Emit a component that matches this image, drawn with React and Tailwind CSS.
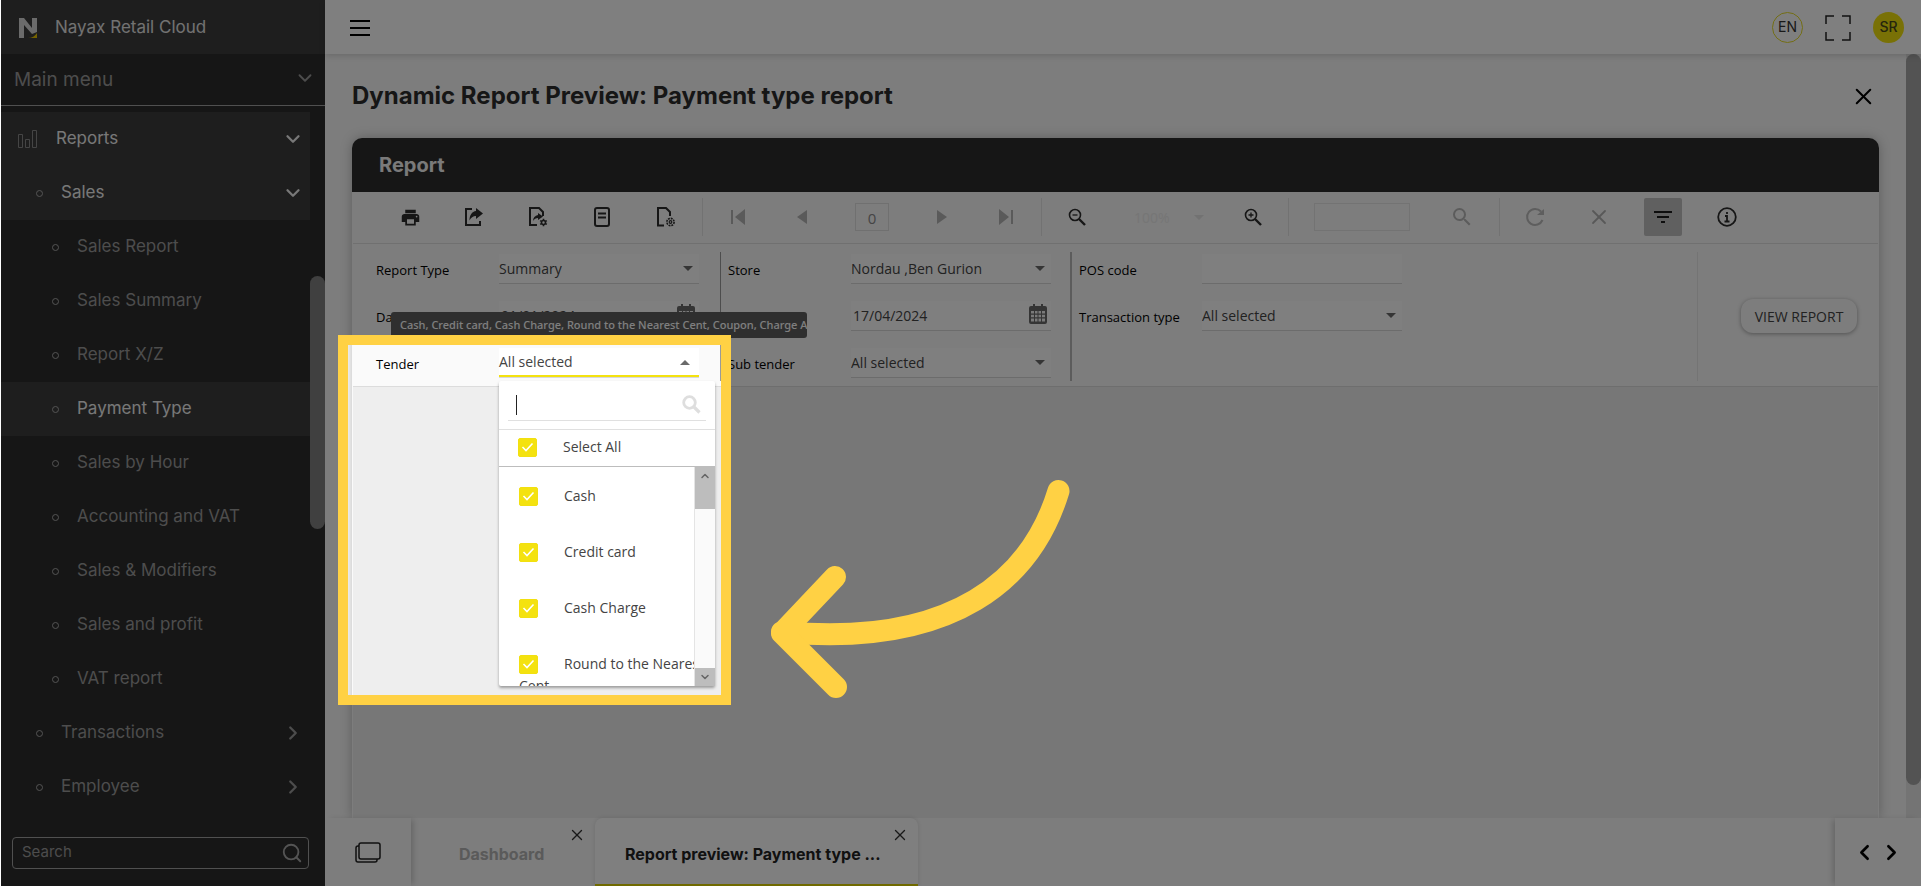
import { useState } from "react";
import { ChevronDown, ChevronRight, ChevronLeft, X, Search } from "lucide-react";
import { MdPrint, MdFilterList, MdSearch } from "react-icons/md";

const menuItems = [
  { label: "Reports", level: 0, open: true },
  { label: "Sales", level: 1, open: true },
  { label: "Sales Report", level: 2 },
  { label: "Sales Summary", level: 2 },
  { label: "Report X/Z", level: 2 },
  { label: "Payment Type", level: 2, active: true },
  { label: "Sales by Hour", level: 2 },
  { label: "Accounting and VAT", level: 2 },
  { label: "Sales & Modifiers", level: 2 },
  { label: "Sales and profit", level: 2 },
  { label: "VAT report", level: 2 },
  { label: "Transactions", level: 1 },
  { label: "Employee", level: 1 },
];

const tenders = ["Cash", "Credit card", "Cash Charge", "Round to the Nearest Cent"];

const Logo = () => (
  <svg width="20" height="22" viewBox="0 0 20 22">
    <path d="M1 21V1h5l8 10V1h5v14l-5 2-8-9v13z" fill="#d6d6d6" />
    <path d="M10 21c4 0 7-2 9-5v5z" fill="#e8c400" />
  </svg>
);

const BarsIcon = () => (
  <svg width="20" height="20" viewBox="0 0 20 20" fill="none" stroke="#8a8a8a">
    <path d="M0.5 5.5h4v13h-4zM7.5 10.5h4v8h-4zM14.5 1.5h4v17h-4z" />
  </svg>
);

const ExportIcon = () => (
  <svg width="20" height="20" viewBox="0 0 20 20" fill="none" stroke="#2d2d2d" strokeWidth="2">
    <path d="M8 2H2v16h14v-4" />
    <path d="M12 1l7 5.5-7 5.5V9c-3 0-5 1.500-6.500 4.500C5.500 8 8 4.500 12 4z" fill="#2d2d2d" stroke="none" />
  </svg>
);

const ExportSettingsIcon = () => (
  <svg width="20" height="20" viewBox="0 0 20 20" fill="none" stroke="#2d2d2d" strokeWidth="2">
    <path d="M9 18H2V1h9l4 4v4" />
    <path d="M10 6l5 3.500-5 3.500v-2c-2 0-4 1-5 3 0-3.500 2-5.500 5-6z" fill="#2d2d2d" stroke="none" />
    <circle cx="15.500" cy="15.500" r="2" strokeWidth="1.600" />
    <path
      d="M15.500 11.700v1.600M15.500 17.700v1.600M12.200 13.600l1.400.800M17.400 16.600l1.400.800M12.200 17.400l1.400-.800M17.400 14.400l1.400-.800"
      strokeWidth="1.600"
    />
  </svg>
);

const PageIcon = () => (
  <svg width="20" height="20" viewBox="0 0 20 20" fill="none" stroke="#2d2d2d" strokeWidth="2">
    <rect x="3" y="1" width="14" height="18" rx="2" />
    <path d="M6 6.500h8M6 10.500h8" />
  </svg>
);

const PageSetupIcon = () => (
  <svg width="20" height="20" viewBox="0 0 20 20" fill="none" stroke="#2d2d2d" strokeWidth="2">
    <path d="M8 18.500H2V1h8l4 4v4" />
    <circle cx="14.500" cy="15" r="3.600" strokeWidth="1.600" strokeDasharray="1.900 0.900" />
    <circle cx="14.500" cy="15" r="1.300" strokeWidth="1.200" />
  </svg>
);

const FirstIcon = () => (
  <svg width="16" height="16" viewBox="0 0 16 16" fill="#b4b4b4">
    <path d="M1 1h2v14H1zM15 0v16L5 8z" />
  </svg>
);

const PrevIcon = () => (
  <svg width="10" height="14" viewBox="0 0 10 14" fill="#b4b4b4">
    <path d="M10 0v14L0 7z" />
  </svg>
);

const ZoomIcon = ({ plus }) => (
  <svg width="18" height="18" viewBox="0 0 18 18" fill="none" stroke="#2d2d2d">
    <circle cx="7" cy="7" r="5.500" strokeWidth="1.600" />
    <path d="M11 11l6 6" strokeWidth="2.400" />
    <path d={plus ? "M4.500 7h5M7 4.500v5" : "M4.500 7h5"} strokeWidth="1.300" />
  </svg>
);

const RefreshIcon = () => (
  <svg width="20" height="20" viewBox="0 0 20 20" fill="none" stroke="#bcbcbc" strokeWidth="2">
    <path d="M17.500 13A8 8 0 1 1 16 4.500" />
    <path d="M19 2v6h-7z" fill="#bcbcbc" stroke="none" />
  </svg>
);

const InfoIcon = () => (
  <svg width="20" height="20" viewBox="0 0 20 20" fill="none" stroke="#2d2d2d" strokeWidth="1.800">
    <circle cx="10" cy="10" r="8.800" />
    <path d="M10 5v2M8 9h2v5.500M7.500 14.500h5" />
  </svg>
);

const CalendarIcon = () => (
  <svg width="18" height="20" viewBox="0 0 18 20">
    <path d="M2 2h2V0h2v2h6V0h2v2h2a2 2 0 0 1 2 2v14a2 2 0 0 1-2 2H2a2 2 0 0 1-2-2V4a2 2 0 0 1 2-2z" fill="#6a6a6a" />
    <path
      d="M2 7h3v2.500H2zM6 7h2.500v2.500H6zM9.500 7H12v2.500H9.500zM13 7h3v2.500h-3zM2 10.800h3v2.500H2zM6 10.800h2.500v2.500H6zM9.500 10.800H12v2.500H9.500zM13 10.800h3v2.500h-3zM2 14.600h3v3H2zM6 14.600h2.500v3H6zM9.500 14.600H12v3H9.500zM13 14.600h3v3h-3z"
      fill="#f4f4f4"
    />
  </svg>
);

const FilterSearchIcon = () => (
  <svg width="19" height="19" viewBox="0 0 19 19" fill="none" stroke="#dedede">
    <circle cx="7.500" cy="7.500" r="5.800" strokeWidth="2.800" />
    <path d="M11.500 11.500l6 6" strokeWidth="3.200" />
  </svg>
);

const Caret = ({ up, light }) => (
  <svg width="10" height="5" viewBox="0 0 10 5" fill={light ? "#e4e4e4" : "#6a6a6a"}>
    <path d={up ? "M0 5h10L5 0z" : "M0 0h10L5 5z"} />
  </svg>
);

const MenuItem = ({ item }) => {
  const bright = item.open || item.active;
  return (
    <button
      className={`flex items-center h-[54px] w-full shrink-0 text-left ${
        bright ? "bg-[#3c3c3c] text-[#f0f0f0]" : "text-[#9a9a9a]"
      } ${item.level === 0 ? "pl-[17px]" : item.level === 1 ? "pl-[35px]" : "pl-[51px]"}`}
    >
      {item.level === 0 ? (
        <BarsIcon />
      ) : (
        <span className="size-[7px] rounded-full border border-[#a8a8a8]" />
      )}
      <span className="flex-1 pl-[18px]">{item.label}</span>
      {item.open && <ChevronDown size={22} strokeWidth={2.5} className="mr-[6px]" />}
      {item.level === 1 && !item.open && <ChevronRight size={22} strokeWidth={2.5} className="mr-[6px]" />}
    </button>
  );
};

const Sidebar = () => (
  <aside className="flex flex-col w-[324px] shrink-0 bg-[#2d2d2d] text-[17px]">
    <div className="flex items-center gap-[17px] h-[54px] shrink-0 pl-[17px] pt-px bg-[#3c3c3c] text-[#e4e4e4]">
      <Logo />
      <span>Nayax Retail Cloud</span>
    </div>
    <button className="flex items-center justify-between h-[52px] shrink-0 pl-[13px] pr-[9px] pt-[2px] border-b border-[#a0a0a0] text-[19px] text-[#9a9a9a]">
      Main menu
      <ChevronDown size={22} strokeWidth={2} className="-mt-[5px]" />
    </button>
    <div className="flex flex-1 min-h-0 mt-[6px]">
      <nav className="flex flex-col flex-1 overflow-hidden">
        {menuItems.map((item) => (
          <MenuItem key={item.label} item={item} />
        ))}
      </nav>
      <div className="w-[15px] pt-[164px]">
        <div className="h-[253px] rounded-full bg-[#808080]" />
      </div>
    </div>
    <div className="flex items-center h-[32px] shrink-0 ml-[11px] mr-[16px] mt-[10px] mb-[17px] pl-[9px] pr-[5px] rounded border border-[#a0a0a0]">
      <input
        aria-label="Search menu"
        placeholder="Search"
        className="flex-1 min-w-0 pb-[2px] bg-transparent outline-none text-[15px] placeholder:text-[#9a9a9a]"
      />
      <Search size={22} strokeWidth={2} className="text-[#a8a8a8]" />
    </div>
  </aside>
);

const TopBar = () => (
  <header className="relative z-10 flex items-center h-[54px] shrink-0 pl-[25px] pr-[17px] pt-px bg-white shadow-[0_2px_6px_rgba(0,0,0,0.15)]">
    <button aria-label="Toggle menu" className="flex flex-col gap-[5px]">
      <span className="w-[20px] h-[2px] bg-black" />
      <span className="w-[20px] h-[2px] bg-black" />
      <span className="w-[20px] h-[2px] bg-black" />
    </button>
    <button className="size-[31px] ml-auto pb-[2px] rounded-full border border-[#e6dc28] text-[14px] text-[#333]">EN</button>
    <button aria-label="Full screen" className="mx-[22px]">
      <svg width="26" height="26" viewBox="0 0 26 26" fill="none" stroke="#222" strokeWidth="1.500">
        <path d="M1 9V1h8M17 1h8v8M25 17v8h-8M9 25H1v-8" />
      </svg>
    </button>
    <button className="size-[31px] pb-[2px] rounded-full bg-[#f2e30c] text-[14px] font-medium text-[#4a4a1c]">SR</button>
  </header>
);

const ToolButton = ({ label, children, active }) => (
  <button
    aria-label={label}
    className={`flex items-center justify-center size-[38px] shrink-0 rounded-[2px] ${active ? "bg-[#c0c0c0]" : ""}`}
  >
    {children}
  </button>
);

const Divider = () => <span className="w-px h-[38px] shrink-0 bg-[#e4e4e4]" />;

const Toolbar = () => (
  <div className="flex items-center h-[52px] pl-[38px] pb-px border-b border-[#e0e0e0] bg-[#fafafa]">
    <div className="flex gap-[26px] pr-[17px]">
      <ToolButton label="Print"><MdPrint size={21} className="text-[#2d2d2d]" /></ToolButton>
      <ToolButton label="Export"><ExportIcon /></ToolButton>
      <ToolButton label="Export settings"><ExportSettingsIcon /></ToolButton>
      <ToolButton label="Print preview"><PageIcon /></ToolButton>
      <ToolButton label="Page setup"><PageSetupIcon /></ToolButton>
    </div>
    <Divider />
    <div className="flex items-center gap-[26px] px-[16px]">
      <ToolButton label="First page"><FirstIcon /></ToolButton>
      <ToolButton label="Previous page"><PrevIcon /></ToolButton>
      <input
        aria-label="Page number"
        defaultValue="0"
        className="w-[34px] h-[28px] mx-[8px] pt-[2px] border border-[#e0e0e0] text-center text-[15px] text-[#8a8a8a]"
      />
      <ToolButton label="Next page"><span className="rotate-180"><PrevIcon /></span></ToolButton>
      <ToolButton label="Last page"><span className="rotate-180"><FirstIcon /></span></ToolButton>
    </div>
    <Divider />
    <div className="flex items-center px-[16px]">
      <ToolButton label="Zoom out"><ZoomIcon /></ToolButton>
      <div className="flex items-center w-[70px] ml-[38px] mr-[30px]">
        <select aria-label="Zoom" className="flex-1 appearance-none bg-transparent text-[14px] text-[#ececec]">
          <option>100%</option>
        </select>
        <Caret light />
      </div>
      <ToolButton label="Zoom in"><ZoomIcon plus /></ToolButton>
    </div>
    <Divider />
    <input aria-label="Find in report" className="w-[96px] h-[28px] ml-[25px] mr-[33px] border border-[#e6e6e6]" />
    <ToolButton label="Find"><MdSearch size={24} className="text-[#b8b8b8]" /></ToolButton>
    <span className="w-[18px]" />
    <Divider />
    <div className="flex gap-[26px] pl-[16px]">
      <ToolButton label="Refresh"><RefreshIcon /></ToolButton>
      <ToolButton label="Stop"><X size={24} strokeWidth={1.8} className="text-[#b0b0b0]" /></ToolButton>
      <ToolButton label="Toggle parameters" active><MdFilterList size={24} className="text-[#1c1c1c]" /></ToolButton>
      <ToolButton label="About"><InfoIcon /></ToolButton>
    </div>
  </div>
);

const Field = ({ id, label, children }) => (
  <div className="flex h-[47px]">
    <label htmlFor={id} className="w-[123px] shrink-0 pt-[6px] text-[13px] leading-[20px] text-black">
      {label}
    </label>
    <div className="relative flex items-center w-[200px] h-[30px] border-b border-[#d8d8d8] bg-white text-[14px] text-[#444]">
      {children}
    </div>
  </div>
);

const SelectField = ({ id, label, value }) => (
  <Field id={id} label={label}>
    <select id={id} className="flex-1 h-full appearance-none outline-none">
      <option>{value}</option>
    </select>
    <span className="absolute right-[6px] pointer-events-none"><Caret /></span>
  </Field>
);

const DateField = ({ id, label, value }) => (
  <Field id={id} label={label}>
    <input id={id} defaultValue={value} className="flex-1 min-w-0 pl-[2px] outline-none" />
    <button aria-label={`Pick ${label}`} className="pr-[4px] pb-[4px]"><CalendarIcon /></button>
  </Field>
);

const Check = ({ label, checked, onChange }) => (
  <label>
    <span className="relative inline-block size-[19px] mr-[26px] mb-[2px] align-middle">
      <input
        type="checkbox"
        checked={checked}
        onChange={onChange}
        className="block size-[19px] appearance-none rounded-[2px] border border-[#f2e010] checked:bg-[#f4e20f]"
      />
      <svg className="absolute left-0 top-0 pointer-events-none" width="19" height="19" viewBox="0 0 19 19" fill="none" stroke="#fff" strokeWidth="1.600">
        <path d="M4.500 9l3.500 3.500 6.500-7" />
      </svg>
    </span>
    {label}
  </label>
);

const TenderDropdown = ({ selected, setSelected }) => {
  const toggle = (name) =>
    setSelected(selected.includes(name) ? selected.filter((t) => t !== name) : [...selected, name]);

  return (
    <div className="absolute left-0 top-[33px] w-[216px] rounded-[2px] bg-white shadow-[0_2px_3px_rgba(0,0,0,0.35)]">
      <div className="h-[49px] px-[9px] border-b border-[#e0e0e0]">
        <div className="flex items-center h-[40px] pl-[8px] pr-[5px] pt-[8px] border-b border-[#e0e0e0]">
          <span className="w-px h-[20px] bg-[#222]" />
          <input aria-label="Filter tenders" className="flex-1 min-w-0 outline-none caret-transparent" />
          <FilterSearchIcon />
        </div>
      </div>
      <div className="h-[37px] pl-[19px] pt-[7px] leading-[20px] border-b border-[#bdbdbd]">
        <Check
          label="Select All"
          checked={selected.length === tenders.length}
          onChange={() => setSelected(selected.length === tenders.length ? [] : tenders)}
        />
      </div>
      <div className="flex h-[219px]">
        <ul className="flex-1 h-full overflow-hidden">
          {tenders.map((name) => (
            <li key={name} className="h-[56px] pl-[20px] pt-[19px] -mr-[20px] leading-[20px]">
              <Check label={name} checked={selected.includes(name)} onChange={() => toggle(name)} />
            </li>
          ))}
        </ul>
        <div className="flex flex-col justify-between w-[21px] border-l border-[#e4e4e4] bg-[#fafafa] text-[#666]">
          <div className="flex justify-center h-[42px] pt-[3px] bg-[#bdbdbd]">
            <ChevronDown size={12} strokeWidth={3} className="rotate-180" />
          </div>
          <div className="flex justify-center h-[18px] pt-[3px] bg-[#bdbdbd]">
            <ChevronDown size={12} strokeWidth={3} />
          </div>
        </div>
      </div>
    </div>
  );
};

const TenderField = () => {
  const [selected, setSelected] = useState(tenders);

  return (
    <Field id="tender" label="Tender">
      <button id="tender" aria-expanded="true" className="flex-1 h-full text-left border-b-2 border-[#f4e20f]">
        {selected.length === tenders.length ? "All selected" : `${selected.length} selected`}
      </button>
      <span className="absolute right-[9px] pointer-events-none"><Caret up /></span>
      <div
        role="tooltip"
        className="absolute -left-[108px] -top-[36px] w-[416px] h-[26px] pl-[9px] rounded-[3px] overflow-hidden whitespace-nowrap bg-[#5e5e5e] font-['Noto_Sans',sans-serif] text-[11px] font-medium leading-[26px] text-white"
      >
        Cash, Credit card, Cash Charge, Round to the Nearest Cent, Coupon, Charge Account
      </div>
      <TenderDropdown selected={selected} setSelected={setSelected} />
    </Field>
  );
};

const Parameters = () => (
  <div className="relative z-10 flex h-[143px] pl-[23px] border-b border-[#dcdcdc] bg-[#fafafa] pt-[8px]">
    <div className="relative z-10 pt-[2px] pr-[21px]">
      <SelectField id="report-type" label="Report Type" value="Summary" />
      <DateField id="date-from" label="Date From" value="01/01/2024" />
      <TenderField />
    </div>
    <div className="h-[129px] pt-[2px] pl-[7px] pr-[19px] border-l border-[#9a9a9a]">
      <SelectField id="store" label="Store" value="Nordau ,Ben Gurion" />
      <DateField id="date-to" label="Date To" value="17/04/2024" />
      <SelectField id="sub-tender" label="Sub tender" value="All selected" />
    </div>
    <div className="h-[129px] pt-[2px] pl-[7px] border-l-2 border-[#b8b8b8]">
      <Field id="pos-code" label="POS code">
        <input id="pos-code" className="flex-1 outline-none" />
      </Field>
      <SelectField id="transaction-type" label="Transaction type" value="All selected" />
    </div>
    <div className="flex items-start h-[129px] ml-auto pl-[43px] pr-[21px] pt-[47px] border-l border-[#e8e8e8]">
      <button className="w-[116px] h-[34px] rounded-[12px] bg-[#fafafa] text-[14px] text-[#444] shadow-[0_1px_4px_rgba(0,0,0,0.35)]">
        VIEW REPORT
      </button>
    </div>
  </div>
);

const TabBar = () => (
  <footer className="relative flex h-[68px] shrink-0 bg-[#fafafa]">
    <div className="flex items-center pl-[30px] w-[86px] bg-[#fafafa] shadow-[4px_0_6px_-2px_rgba(0,0,0,0.2)]">
      <button aria-label="Windows">
        <svg width="26" height="21" viewBox="0 0 26 21" fill="none" stroke="#222" strokeWidth="1.500">
          <rect x="4" y="1" width="21" height="16" rx="2" />
          <path d="M4 4H3a2 2 0 0 0-2 2v12a2 2 0 0 0 2 2h17a2 2 0 0 0 2-2v-1" />
        </svg>
      </button>
    </div>
    <div className="relative flex w-[184px] pl-[48px] pt-[25px]">
      <button className="h-[22px] text-[16px] leading-[22px] font-bold text-[#b4b4b4]">Dashboard</button>
      <button aria-label="Close Dashboard" className="absolute right-[9px] top-[8px]">
        <X size={18} strokeWidth={1.8} className="text-[#333]" />
      </button>
    </div>
    <div className="relative flex w-[323px] pl-[30px] pt-[25px] rounded-t-lg border-b-2 border-[#e0d400] bg-white shadow-[0_0_4px_rgba(0,0,0,0.12)]">
      <button className="h-[22px] text-[16px] leading-[22px] font-bold text-[#222]">
        Report preview: Payment type ...
      </button>
      <button aria-label="Close Report preview" className="absolute right-[9px] top-[8px]">
        <X size={18} strokeWidth={1.8} className="text-[#333]" />
      </button>
    </div>
    <div className="flex items-center w-[86px] ml-auto pl-[17px] gap-[2px] bg-[#fafafa] shadow-[-4px_0_6px_-2px_rgba(0,0,0,0.2)]">
      <button aria-label="Previous tab"><ChevronLeft size={25} strokeWidth={2.5} /></button>
      <button aria-label="Next tab"><ChevronRight size={25} strokeWidth={2.5} /></button>
    </div>
  </footer>
);

// Dims the page around the Tender filter and points at it
const Spotlight = () => (
  <div className="absolute inset-0 z-20 overflow-hidden pointer-events-none">
    <div className="absolute left-[337px] top-[335px] w-[393px] h-[370px] border-10 border-[#ffd144] shadow-[0_0_0_3000px_rgba(0,0,0,0.5)]" />
    <svg
      className="absolute left-[769px] top-[478px]"
      width="304"
      height="222"
      viewBox="770 478 304 222"
      fill="none"
      stroke="#ffd144"
      strokeWidth="22"
      strokeLinecap="round"
      strokeLinejoin="round"
    >
      <path d="M1058.500 491C1032 578 955 648 782 632" />
      <path d="M835 577L782 633L836 687" />
    </svg>
  </div>
);

const App = () => {
  return (
    <div className="h-screen px-px bg-white font-[Inter,sans-serif]">
      <div className="relative flex h-full overflow-hidden">
        <Sidebar />
        <div className="flex flex-col flex-1 min-w-0 bg-[#fafafa]">
          <TopBar />
          <div className="flex flex-1 min-h-0">
            <main className="flex flex-col flex-1 min-w-0 px-[27px] overflow-hidden">
              <div className="flex items-center justify-between h-[84px] shrink-0 pr-[2px]">
                <h1 className="text-[24px] font-bold text-[#2d2d2d]">
                  Dynamic Report Preview: Payment type report
                </h1>
                <button aria-label="Close"><X size={27} className="text-black" strokeWidth={1.8} /></button>
              </div>
              <section className="flex flex-col flex-1 rounded-t-[10px] shadow-[0_0_12px_rgba(0,0,0,0.25)]">
                <h2 className="h-[54px] shrink-0 pl-[27px] rounded-t-[10px] bg-[#2d2d2d] text-[20px] leading-[54px] font-bold text-[#f4f4f4]">
                  Report
                </h2>
                <div className="flex flex-col flex-1 mx-px bg-[#eee] font-['Open_Sans',sans-serif]">
                  <Toolbar />
                  <Parameters />
                </div>
              </section>
            </main>
            <div className="w-[15px] bg-[#e8e8e8] pb-[33px]">
              <div className="h-full rounded-full bg-[#a6a6a6]" />
            </div>
          </div>
          <TabBar />
        </div>
        <Spotlight />
      </div>
    </div>
  );
};

export default App;
